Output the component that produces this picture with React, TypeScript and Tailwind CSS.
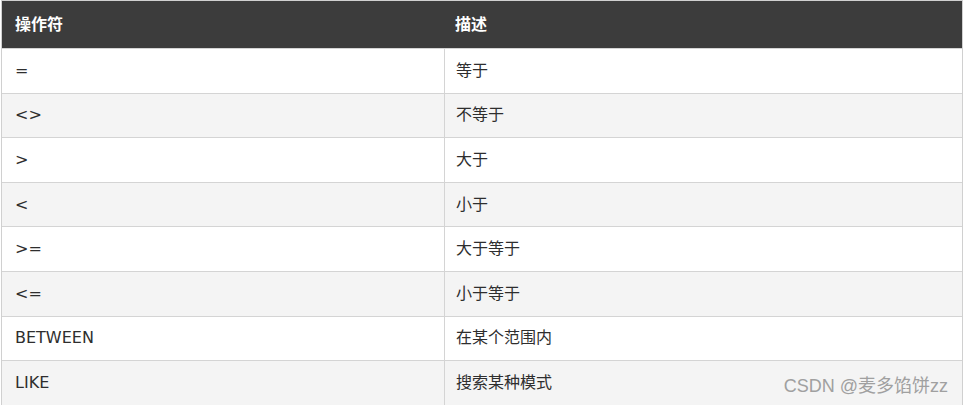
const rows = [
  { op: "=", desc: "等于" },
  { op: "<>", desc: "不等于" },
  { op: ">", desc: "大于" },
  { op: "<", desc: "小于" },
  { op: ">=", desc: "大于等于" },
  { op: "<=", desc: "小于等于" },
  { op: "BETWEEN", desc: "在某个范围内" },
  { op: "LIKE", desc: "搜索某种模式" },
]

export default function App() {
  return (
    <div
      className="relative w-[965px] h-[406px] bg-white overflow-hidden pl-px pr-[2px]"
      style={{ fontFamily: '"DejaVu Sans", "Noto Sans CJK SC", sans-serif' }}
    >
      <div className="border-t border-l border-r border-[#d0d0d0]">
        <div className="grid grid-cols-[442px_1fr] h-[47px] bg-[#3c3c3c] text-white font-bold text-[16px] items-center">
          <div className="pl-[13px]">操作符</div>
          <div className="pl-[11px]">描述</div>
        </div>
        {rows.map((row, i) => (
          <div
            key={row.op}
            className={`grid grid-cols-[442px_1fr] h-[44.6px] border-t border-[#d4d4d4] text-[16px] text-[#2e2e2e] items-center ${
              i % 2 === 0 ? "bg-white" : "bg-[#f4f4f4]"
            }`}
          >
            <div className="pl-[13px] h-full flex items-center">{row.op}</div>
            <div className="pl-[11px] h-full flex items-center border-l border-[#d4d4d4]">{row.desc}</div>
          </div>
        ))}
      </div>
      <div
        className="absolute right-[17px] bottom-[6px] text-[18px] text-[#a0a0a0]"
        style={{ fontFamily: '"Liberation Sans", "Noto Sans CJK SC", sans-serif' }}
      >
        CSDN @麦多馅饼zz
      </div>
    </div>
  )
}
